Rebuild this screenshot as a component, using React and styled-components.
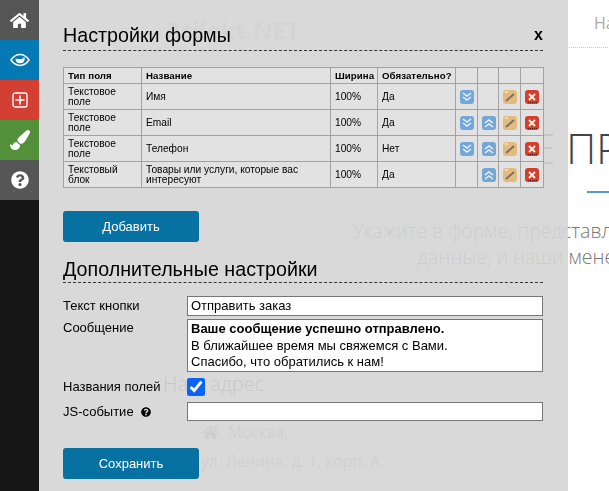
import styled, { createGlobalStyle } from "styled-components";
import { FaHome, FaPaintBrush, FaQuestionCircle } from "react-icons/fa";

const GlobalStyle = createGlobalStyle`
  html, body {
    margin: 0;
    height: 100%;
    overflow: hidden;
    background: #fff;
    font-family: "Liberation Sans", Arial, sans-serif;
  }
`;

// page behind the panel
const Backdrop = styled.div`
  width: 1000px;
  height: 491px;
  overflow: hidden;
  font-family: "Open Sans", sans-serif;
  font-weight: 300;
  color: #777;
`;
const TopBar = styled.div`
  height: 47px;
  display: flex;
  border-bottom: 1px dotted #ccc;
`;
const BrandName = styled.div`
  margin: 13px 0 0 165px;
  font-size: 24px;
  font-weight: 700;
  color: #ccc;
  width: 429px;
`;
const TopLink = styled.div`
  margin-top: 12px;
  font-size: 16px;
  font-weight: 400;
  color: #aaa;
`;
const Intro = styled.div`
  width: 800px;
  margin-left: 212px;
  display: flex;
  flex-direction: column;
  align-items: center;
  padding-top: 72px;
`;
const BigTitle = styled.div`
  margin-right: 42px;
  font-size: 42px;
  line-height: 56px;
  color: #444;
  white-space: nowrap;
`;
const BlueRule = styled.div`
  width: 50px;
  height: 2px;
  background: #5b98c4;
  margin-top: 15px;
`;
const IntroText = styled.div`
  margin: 25px 0 0 20px;
  font-size: 19.5px;
  line-height: 26px;
  text-align: center;
  white-space: nowrap;
`;
const Address = styled.div`
  margin: 100px 0 0 163px;
  color: #444;
`;
const AddressTitle = styled.div`
  font-size: 20px;
  line-height: 28px;
`;
const AddressLine = styled.div`
  display: flex;
  align-items: center;
  gap: 9px;
  margin: 24px 0 0 39px;
  font-size: 15.5px;
  font-weight: 400;
  line-height: 20px;
  color: #999;
`;
const AddressStreet = styled.div`
  margin: 9px 0 0 38px;
  font-size: 15.5px;
  font-weight: 400;
  line-height: 20px;
  color: #999;
`;

// overlay
const Overlay = styled.div`
  position: fixed;
  inset: 0 auto 0 0;
  display: flex;
  color: #000;
`;
const Sidebar = styled.nav`
  width: 39px;
  background: #161616;
  display: flex;
  flex-direction: column;
`;
const SideItem = styled.div`
  height: 40px;
  display: flex;
  align-items: center;
  justify-content: center;
  color: #fff;
  font-size: 18px;
  background-color: ${({ $bg }) => $bg};
  background-image: ${({ $dotted }) =>
    $dotted ? "radial-gradient(rgba(255, 255, 255, 0.14) 0.6px, transparent 0.8px)" : "none"};
  background-size: 9px 9px;
`;
const Panel = styled.div`
  width: 529px;
  box-sizing: border-box;
  padding: 0 25px 0 24px;
  background: rgba(213, 213, 213, 0.9);
`;
const TitleRow = styled.div`
  height: 51px;
  box-sizing: border-box;
  display: flex;
  align-items: flex-end;
  justify-content: space-between;
  border-bottom: 1px dashed #333;
  padding-bottom: 3px;
`;
const Title = styled.h2`
  margin: 0;
  font-size: 19.7px;
  line-height: 24px;
  font-weight: 400;
`;
const CloseMark = styled.span`
  font-size: 16px;
  font-weight: 700;
  line-height: 22px;
  margin-bottom: 1px;
`;
const FieldTable = styled.table`
  width: 480px;
  margin-top: 16px;
  border-collapse: collapse;
  table-layout: fixed;
  background: #e2e2e2;
  font-size: 10.2px;
  line-height: 10px;
`;
const HeadCell = styled.th`
  width: ${({ $w }) => $w}px;
  box-sizing: border-box;
  height: 16px;
  padding: 0 4px;
  border: 1px solid #a3a3a3;
  text-align: left;
  font-weight: 700;
  font-size: 9.7px;
  letter-spacing: 0.05px;
`;
const Cell = styled.td`
  height: 26px;
  box-sizing: border-box;
  padding: 0 4px;
  border: 1px solid #a3a3a3;
  text-align: ${({ $center }) => ($center ? "center" : "left")};
  vertical-align: middle;
`;
const IconSvg = styled.svg`
  display: block;
  margin: 0 auto;
  width: 14px;
  height: 14px;
`;
const BlueButton = styled.button`
  display: block;
  width: 136px;
  height: 31px;
  margin-top: ${({ $top }) => $top}px;
  border: none;
  border-radius: 3px;
  background: #0771a2;
  color: #fff;
  font-family: inherit;
  font-size: 13px;
`;
const SectionTitle = styled(TitleRow)`
  height: 30px;
  margin-top: 11px;
  padding-bottom: 1px;
  margin-bottom: 13px;
`;
const FormRow = styled.div`
  display: flex;
  align-items: ${({ $top }) => ($top ? "flex-start" : "center")};
  margin-bottom: ${({ $gap }) => $gap}px;
`;
const Label = styled.label`
  width: 124px;
  font-size: 13px;
  line-height: 18px;
  display: flex;
  align-items: center;
  gap: 7px;
`;
const TextBox = styled.div`
  width: 356px;
  box-sizing: border-box;
  height: ${({ $h }) => $h}px;
  padding: 1px 3px;
  border: 1px solid #767676;
  background: #fff;
  font-size: 13px;
  line-height: 16.5px;
`;
const Check = styled.input`
  width: 18px;
  height: 18px;
  margin: 0;
  accent-color: #0b63f6;
`;

const ChevronIcon = ({ up }) => (
  <IconSvg viewBox="0 0 14 14">
    <rect width="14" height="14" rx="3" fill="#74a6d8" />
    <path
      d={up ? "M3 7l4-3 4 3M3 11l4-3 4 3" : "M3 3l4 3 4-3M3 7l4 3 4-3"}
      fill="none"
      stroke="#e8f0f9"
      strokeWidth="1.5"
    />
  </IconSvg>
);
const PencilIcon = () => (
  <IconSvg viewBox="0 0 14 14">
    <rect width="14" height="14" rx="3" fill="#e3bb7c" />
    <path d="M3 11l8-7" stroke="#77706a" strokeWidth="2" />
    <path d="M2 2l3 0" stroke="#f6e6c8" strokeWidth="1.5" />
  </IconSvg>
);
const RemoveIcon = () => (
  <IconSvg viewBox="0 0 14 14">
    <rect width="14" height="14" rx="3" fill="#d33f2c" />
    <path d="M4 4l6 6M10 4l-6 6" stroke="#fbeee2" strokeWidth="2" />
    <path d="M3 12.5h9" stroke="#5a1a12" strokeWidth="1" strokeDasharray="1 1" />
  </IconSvg>
);
const EyeGlyph = () => (
  <svg viewBox="0 0 20 14" width="20" height="14">
    <path d="M1 7c2.5-3.6 5.6-5.4 9-5.4s6.500 1.800 9 5.400c-2.500 3.600-5.600 5.400-9 5.400S3.500 10.600 1 7z" fill="none" stroke="#fff" strokeWidth="1.500" />
    <path d="M5.500 5.500a4.600 4.600 0 0 0 9 1.500c.3-1.200.2-2.500-.4-3.600-.2 1.500-1.500 2.500-3.200 2.700-1.800.2-3.500 0-5.400-.6z" fill="#fff" />
  </svg>
);
const FramedPlus = () => (
  <svg viewBox="0 0 16 16" width="16" height="16" fill="none" stroke="#fff">
    <rect x="1" y="1" width="14" height="14" rx="2" strokeWidth="1.3" />
    <path d="M8 3.500v9M3.500 8h9" strokeWidth="1.6" />
  </svg>
);

const rows = [
  { type: "Текстовое поле", name: "Имя", req: "Да", down: true, up: false },
  { type: "Текстовое поле", name: "Email", req: "Да", down: true, up: true },
  { type: "Текстовое поле", name: "Телефон", req: "Нет", down: true, up: true },
  {
    type: "Текстовый блок",
    name: "Товары или услуги, которые вас интересуют",
    req: "Да",
    down: false,
    up: true,
  },
];

const App = () => {
  return (
    <>
      <GlobalStyle />
      <Backdrop>
        <TopBar>
          <BrandName>Atilekt.NET</BrandName>
          <TopLink>Наша компания</TopLink>
        </TopBar>
        <Intro>
          <BigTitle>ОФОРМИТЕ ПРЕДЗАКАЗ НА</BigTitle>
          <BlueRule />
          <IntroText>
            Укажите в форме, представленной ниже, ваши контактные
            <br />
            данные, и наши менеджеры свяжутся с вами
          </IntroText>
        </Intro>
        <Address>
          <AddressTitle>Наш адрес</AddressTitle>
          <AddressLine>
            <FaHome size={17} />
            Москва,
          </AddressLine>
          <AddressStreet>ул. Ленина, д. 1, корп. А</AddressStreet>
        </Address>
      </Backdrop>
      <Overlay>
        <Sidebar>
          <SideItem $bg="#555555" $dotted>
            <FaHome size={19} />
          </SideItem>
          <SideItem $bg="#0579b3">
            <EyeGlyph />
          </SideItem>
          <SideItem $bg="#d33f32">
            <FramedPlus />
          </SideItem>
          <SideItem $bg="#52913a">
            <FaPaintBrush size={20} />
          </SideItem>
          <SideItem $bg="#555555" $dotted>
            <FaQuestionCircle />
          </SideItem>
        </Sidebar>
        <Panel>
          <TitleRow>
            <Title>Настройки формы</Title>
            <CloseMark>x</CloseMark>
          </TitleRow>
          <FieldTable>
            <thead>
              <tr>
                <HeadCell $w={78}>Тип поля</HeadCell>
                <HeadCell $w={189}>Название</HeadCell>
                <HeadCell $w={47}>Ширина</HeadCell>
                <HeadCell $w={78}>Обязательно?</HeadCell>
                <HeadCell $w={22} />
                <HeadCell $w={21} />
                <HeadCell $w={22} />
                <HeadCell $w={23} />
              </tr>
            </thead>
            <tbody>
              {rows.map((row) => (
                <tr key={row.name}>
                  <Cell>{row.type}</Cell>
                  <Cell>{row.name}</Cell>
                  <Cell>100%</Cell>
                  <Cell>{row.req}</Cell>
                  <Cell $center>{row.down && <ChevronIcon />}</Cell>
                  <Cell $center>{row.up && <ChevronIcon up />}</Cell>
                  <Cell $center>
                    <PencilIcon />
                  </Cell>
                  <Cell $center>
                    <RemoveIcon />
                  </Cell>
                </tr>
              ))}
            </tbody>
          </FieldTable>
          <BlueButton $top={23}>Добавить</BlueButton>
          <SectionTitle>
            <Title>Дополнительные настройки</Title>
          </SectionTitle>
          <FormRow $gap={3}>
            <Label>Текст кнопки</Label>
            <TextBox $h={20}>Отправить заказ</TextBox>
          </FormRow>
          <FormRow $top $gap={6}>
            <Label>Сообщение</Label>
            <TextBox $h={53}>
              <b>Ваше сообщение успешно отправлено.</b>
              <br />
              В ближайшее время мы свяжемся с Вами.
              <br />
              Спасибо, что обратились к нам!
            </TextBox>
          </FormRow>
          <FormRow $gap={6}>
            <Label>Названия полей</Label>
            <Check type="checkbox" defaultChecked />
          </FormRow>
          <FormRow $gap={27}>
            <Label>
              JS-событие
              <FaQuestionCircle size={10} />
            </Label>
            <TextBox $h={19} />
          </FormRow>
          <BlueButton $top={0}>Сохранить</BlueButton>
        </Panel>
      </Overlay>
    </>
  );
};

export default App;
